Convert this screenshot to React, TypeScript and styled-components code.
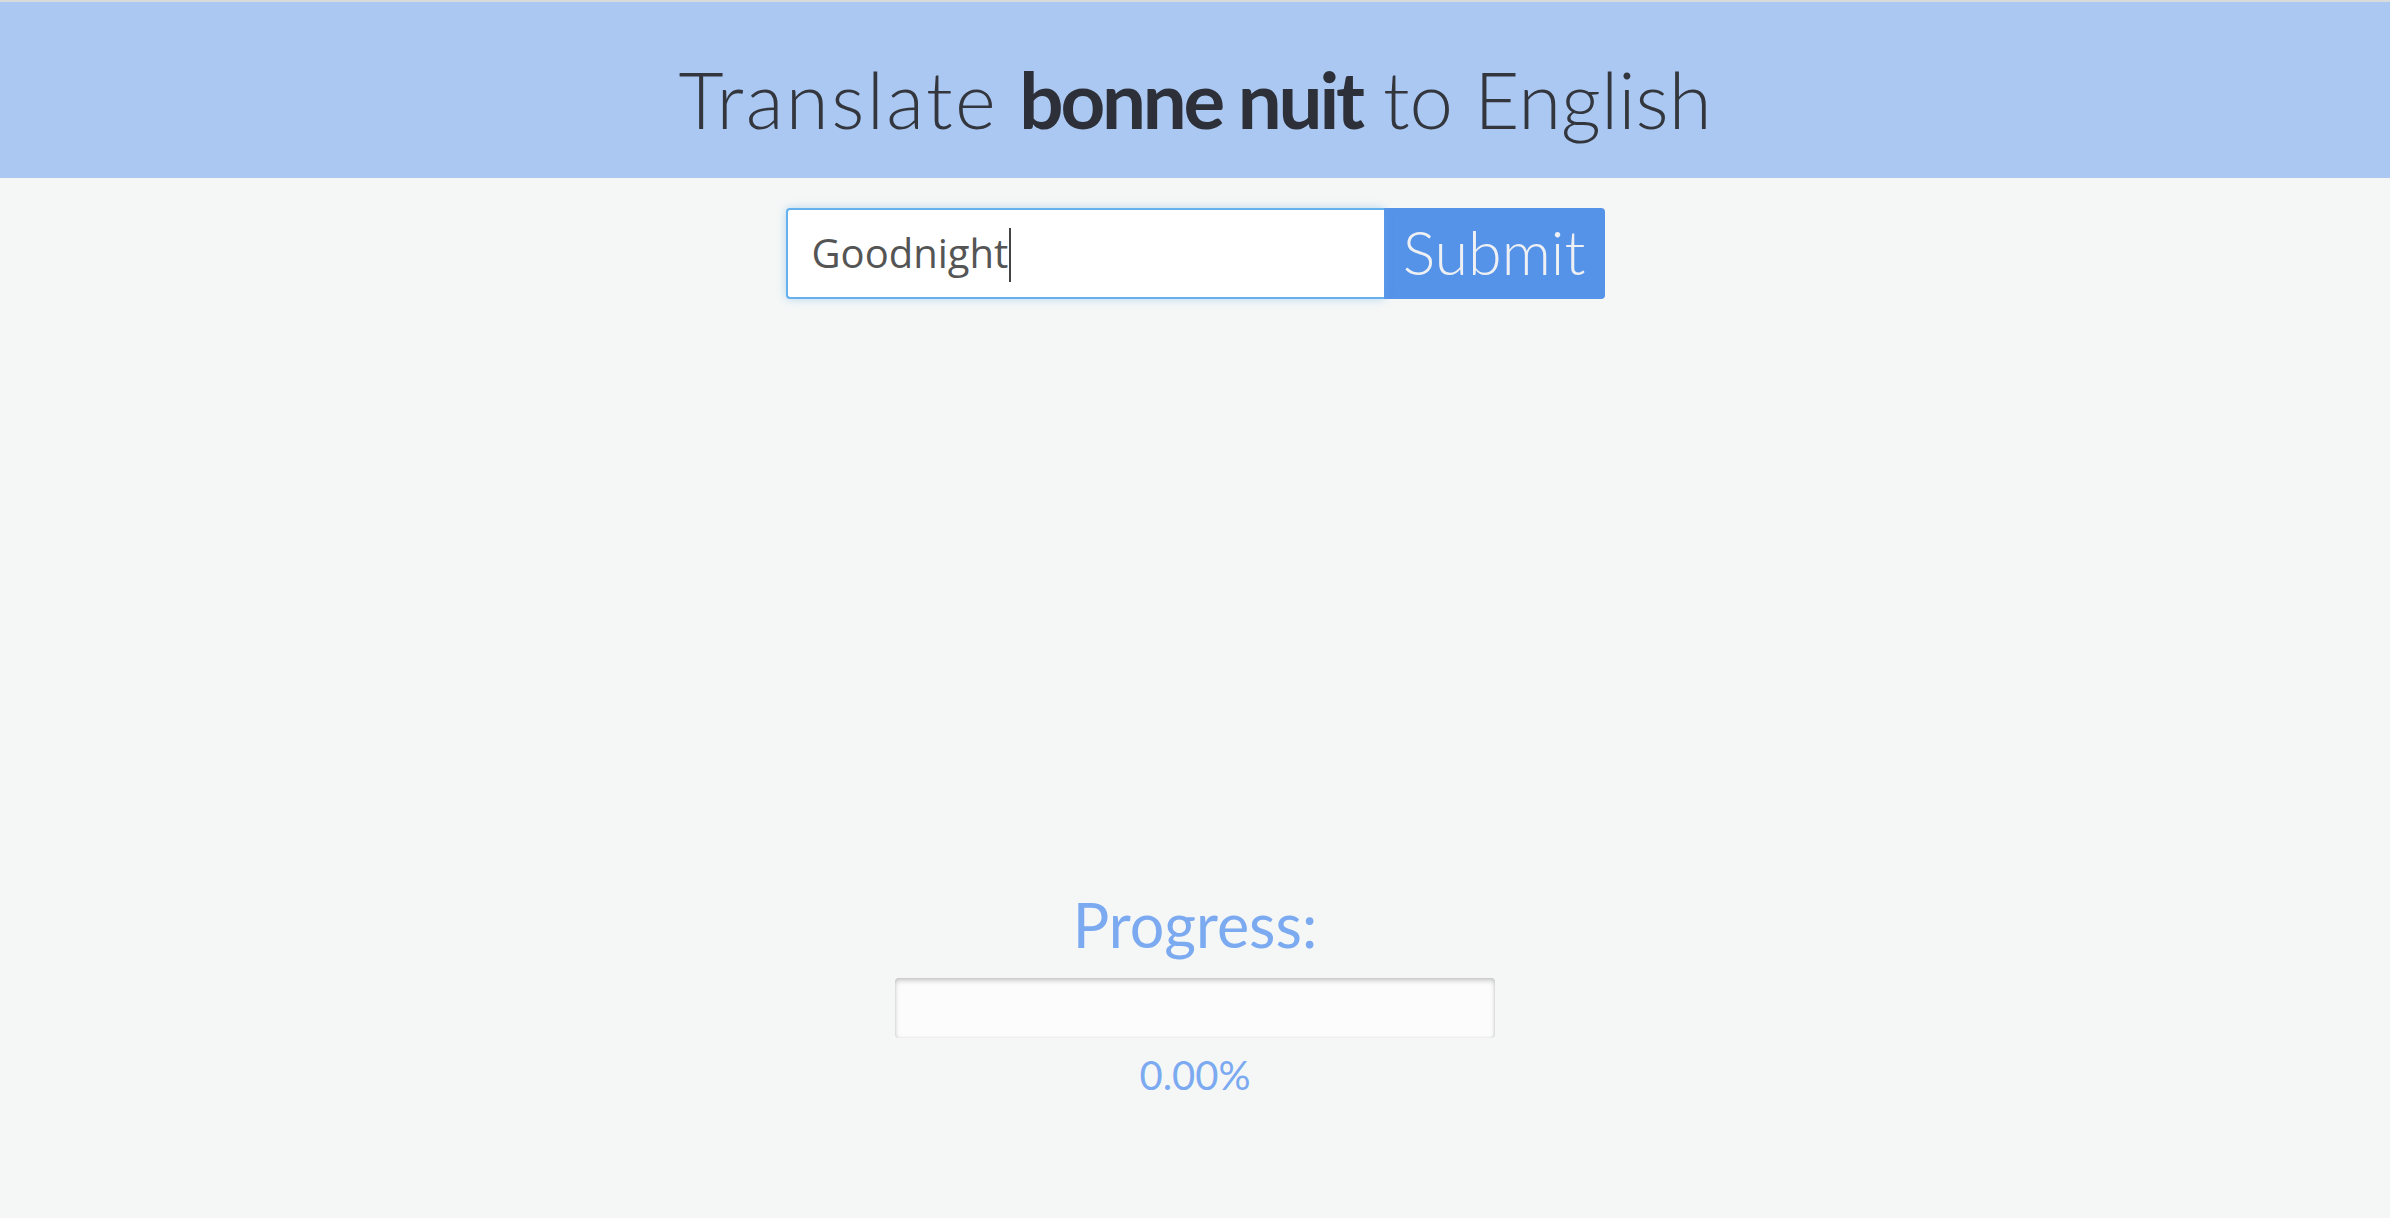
import React from "react";
import styled, { createGlobalStyle } from "styled-components";

const Global = createGlobalStyle`
  html, body { margin: 0; padding: 0; }
  body {
    background: #f5f7f6;
    font-family: "Lato", "Liberation Sans", sans-serif;
    min-height: 1218px;
  }
`;

const Header = styled.header`
  border-top: 2px solid #d9dadb;
  background: #aac8f2;
  height: 176px;
  display: flex;
  align-items: center;
  justify-content: center;
`;

const Title = styled.h1`
  margin: 0;
  font-family: "Lato", sans-serif;
  font-weight: 300;
  font-size: 78px;
  color: #33363d;
  line-height: 1;
  padding-top: 18px;
  white-space: pre;
`;

const Light = styled.span<{ $spacing: number }>`
  letter-spacing: ${(p) => p.$spacing}px;
`;

const Bold = styled.b`
  font-weight: 700;
  color: #2d3038;
  letter-spacing: -3.2px;
`;

const Form = styled.form`
  display: flex;
  justify-content: center;
  margin-top: 30px;
`;

const Field = styled.div`
  position: relative;
`;

const Input = styled.input`
  box-sizing: border-box;
  width: 598px;
  height: 91px;
  border: 2px solid #66b0ee;
  border-right: none;
  border-radius: 4px 0 0 4px;
  background: #fff;
  box-shadow: 0 0 8px rgba(102, 175, 233, 0.45);
  padding: 0 24px 3px;
  font-family: "Open Sans", sans-serif;
  font-size: 40px;
  color: #555;
  outline: none;
  caret-color: transparent;
`;

const Caret = styled.span`
  position: absolute;
  left: 223px;
  top: 20px;
  width: 2px;
  height: 54px;
  background: #444;
  pointer-events: none;
`;

const SubmitButton = styled.button`
  box-sizing: border-box;
  width: 221px;
  height: 91px;
  border: none;
  border-radius: 0 4px 4px 0;
  background: #5593e9;
  color: #eef0f4;
  font-family: "Lato", sans-serif;
  font-weight: 300;
  font-size: 61px;
  padding: 0 0 4px;
  cursor: pointer;
`;

const ProgressSection = styled.section`
  display: flex;
  flex-direction: column;
  align-items: center;
  margin-top: 595px;
`;

const ProgressLabel = styled.h2`
  margin: 0;
  font-family: "Lato", sans-serif;
  font-weight: 400;
  font-size: 61px;
  line-height: 1;
  color: #7caaf1;
`;

const Track = styled.div`
  box-sizing: border-box;
  margin-top: 23px;
  width: 600px;
  height: 60px;
  border-radius: 4px;
  background: #fcfcfc;
  box-shadow: inset 0 3px 5px rgba(0, 0, 0, 0.18), inset 0 0 3px rgba(0, 0, 0, 0.12);
  overflow: hidden;
`;

const Fill = styled.div`
  height: 100%;
  background: #7caaf1;
`;

const Percent = styled.div`
  margin-top: 17px;
  font-family: "Lato", sans-serif;
  font-size: 40px;
  line-height: 1;
  color: #7caaf1;
`;

export default function App() {
  const progress = 0;
  return (
    <>
      <Global />
      <Header>
        <Title>
          <Light $spacing={2.4}>Translate</Light>
          {" "}
          <Bold>bonne nuit</Bold>
          <Light $spacing={0}> to English</Light>
        </Title>
      </Header>
      <Form onSubmit={(e) => e.preventDefault()}>
        <Field>
          <Input defaultValue="Goodnight" />
          <Caret />
        </Field>
        <SubmitButton type="submit">Submit</SubmitButton>
      </Form>
      <ProgressSection>
        <ProgressLabel>Progress:</ProgressLabel>
        <Track>
          <Fill style={{ width: `${progress}%` }} />
        </Track>
        <Percent>{progress.toFixed(2)}%</Percent>
      </ProgressSection>
    </>
  );
}
